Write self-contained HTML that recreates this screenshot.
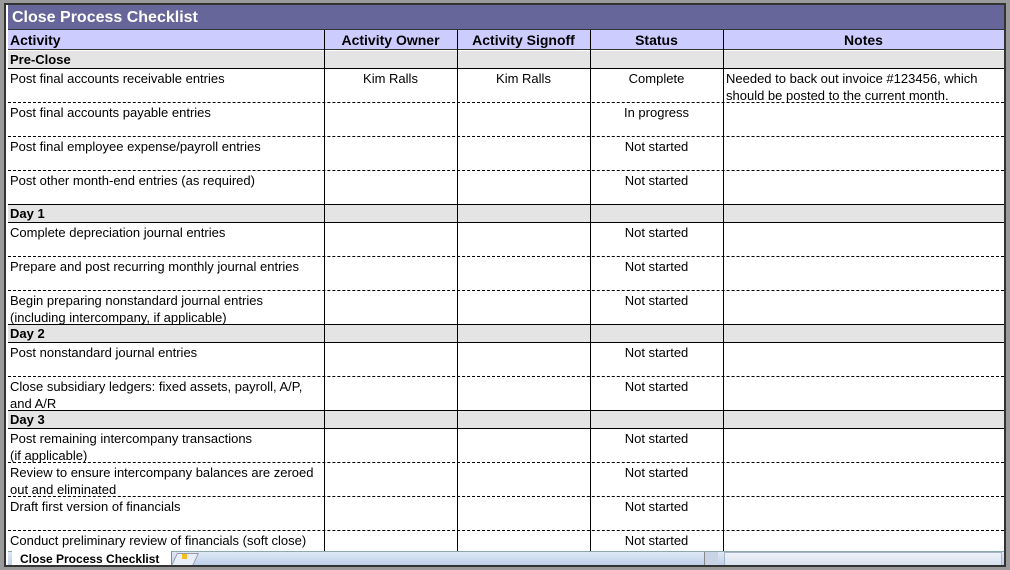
<!DOCTYPE html>
<html><head><meta charset="utf-8"><style>
*{margin:0;padding:0;box-sizing:border-box}
body{width:1010px;height:570px;background:#9a9a9a;position:relative;overflow:hidden;font-family:"Liberation Sans",Arial,sans-serif;font-size:13px;color:#000}
.frame{position:absolute;left:4px;top:3px;width:1002px;height:564px;border:2px solid #333;background:#fff;overflow:hidden}
.a{position:absolute}
.title{left:2px;top:0;width:996px;height:25px;background:#66669a;color:#fff;font-weight:bold;font-size:16px;line-height:25px;padding-left:4px;border-bottom:1px solid #333}
.hdr{left:2px;top:25px;width:996px;height:20px;background:#ccccff;border-bottom:1px solid #333}
.sec{background:#e4e4e4;font-weight:bold}
.vl{position:absolute;top:25px;width:1px;height:540px;background:#000}
.t{position:absolute;line-height:17px;white-space:nowrap}
.row{position:absolute;left:2px;width:996px}
.dash{border-bottom:1px dashed #000}
.sol{border-bottom:1px solid #000}
.c{text-align:center}
.h{font-weight:bold;font-size:14px;line-height:20px;text-align:center}
.tabbar{position:absolute;left:2px;top:546px;width:996px;height:16px;background:linear-gradient(#dfe8f6,#b9cbe6);border-top:1px solid #8aa}
</style></head><body>
<div class="frame">
<div class="a title">Close Process Checklist</div>
<div class="a hdr"></div>
<div class="t" style="left:4px;top:25px;font-weight:bold;font-size:14px;line-height:20px">Activity</div>
<div class="t h" style="left:318px;top:25px;width:133px">Activity Owner</div>
<div class="t h" style="left:451px;top:25px;width:133px">Activity Signoff</div>
<div class="t h" style="left:584px;top:25px;width:133px">Status</div>
<div class="t h" style="left:717px;top:25px;width:281px">Notes</div>

<div class="row sec sol" style="top:46px;height:18px"></div>
<div class="t" style="left:4px;top:46px;font-weight:bold">Pre-Close</div>
<div class="row dash" style="top:64px;height:34px"></div>
<div class="row dash" style="top:98px;height:34px"></div>
<div class="row dash" style="top:132px;height:34px"></div>
<div class="row sol" style="top:166px;height:34px"></div>
<div class="row sec sol" style="top:200px;height:18px"></div>
<div class="row dash" style="top:218px;height:34px"></div>
<div class="row dash" style="top:252px;height:34px"></div>
<div class="row sol" style="top:286px;height:34px"></div>
<div class="row sec sol" style="top:320px;height:18px"></div>
<div class="row dash" style="top:338px;height:34px"></div>
<div class="row sol" style="top:372px;height:34px"></div>
<div class="row sec sol" style="top:406px;height:18px"></div>
<div class="row dash" style="top:424px;height:34px"></div>
<div class="row dash" style="top:458px;height:34px"></div>
<div class="row dash" style="top:492px;height:34px"></div>

<div class="vl" style="left:318px"></div>
<div class="vl" style="left:451px"></div>
<div class="vl" style="left:584px"></div>
<div class="vl" style="left:717px"></div>
<div class="vl" style="left:998px;top:0;height:546px;background:#333"></div>

<div class="t" style="left:4px;top:65px">Post final accounts receivable entries</div>
<div class="t c" style="left:318px;top:65px;width:133px">Kim Ralls</div>
<div class="t c" style="left:451px;top:65px;width:133px">Kim Ralls</div>
<div class="t c" style="left:584px;top:65px;width:133px">Complete</div>
<div class="t" style="left:720px;top:65px">Needed to back out invoice #123456, which<br>should be posted to the current month.</div>

<div class="t" style="left:4px;top:99px">Post final accounts payable entries</div>
<div class="t c" style="left:584px;top:99px;width:133px">In progress</div>
<div class="t" style="left:4px;top:133px">Post final employee expense/payroll entries</div>
<div class="t c" style="left:584px;top:133px;width:133px">Not started</div>
<div class="t" style="left:4px;top:167px">Post other month-end entries (as required)</div>
<div class="t c" style="left:584px;top:167px;width:133px">Not started</div>

<div class="t" style="left:4px;top:200px;font-weight:bold">Day 1</div>
<div class="t" style="left:4px;top:219px">Complete depreciation journal entries</div>
<div class="t c" style="left:584px;top:219px;width:133px">Not started</div>
<div class="t" style="left:4px;top:253px">Prepare and post recurring monthly journal entries</div>
<div class="t c" style="left:584px;top:253px;width:133px">Not started</div>
<div class="t" style="left:4px;top:287px">Begin preparing nonstandard journal entries<br>(including intercompany, if applicable)</div>
<div class="t c" style="left:584px;top:287px;width:133px">Not started</div>

<div class="t" style="left:4px;top:320px;font-weight:bold">Day 2</div>
<div class="t" style="left:4px;top:339px">Post nonstandard journal entries</div>
<div class="t c" style="left:584px;top:339px;width:133px">Not started</div>
<div class="t" style="left:4px;top:373px">Close subsidiary ledgers: fixed assets, payroll, A/P,<br>and A/R</div>
<div class="t c" style="left:584px;top:373px;width:133px">Not started</div>

<div class="t" style="left:4px;top:406px;font-weight:bold">Day 3</div>
<div class="t" style="left:4px;top:425px">Post remaining intercompany transactions<br>(if applicable)</div>
<div class="t c" style="left:584px;top:425px;width:133px">Not started</div>
<div class="t" style="left:4px;top:459px">Review to ensure intercompany balances are zeroed<br>out and eliminated</div>
<div class="t c" style="left:584px;top:459px;width:133px">Not started</div>
<div class="t" style="left:4px;top:493px">Draft first version of financials</div>
<div class="t c" style="left:584px;top:493px;width:133px">Not started</div>
<div class="t" style="left:4px;top:527px">Conduct preliminary review of financials (soft close)</div>
<div class="t c" style="left:584px;top:527px;width:133px">Not started</div>

<div class="tabbar"></div>
<div class="a" style="left:6px;top:546px;width:160px;height:16px;background:#fff;border-right:1px solid #889"></div>
<div class="t" style="left:14px;top:547px;font-weight:bold;line-height:15px;font-size:12px">Close Process Checklist</div>
<div class="a" style="left:168px;top:548px;width:22px;height:13px;background:#e8eef8;border:1px solid #99a;transform:skewX(-25deg)"></div>
<div class="a" style="left:176px;top:549px;width:5px;height:5px;background:#f0c020"></div>
<div class="a" style="left:698px;top:547px;width:14px;height:15px;background:#c8d4e6;border-left:1px solid #888"></div>
<div class="a" style="left:718px;top:547px;width:278px;height:15px;background:linear-gradient(#eef2fa,#d6e0ee);border:1px solid #a8b4c8"></div>
</div>
</body></html>
